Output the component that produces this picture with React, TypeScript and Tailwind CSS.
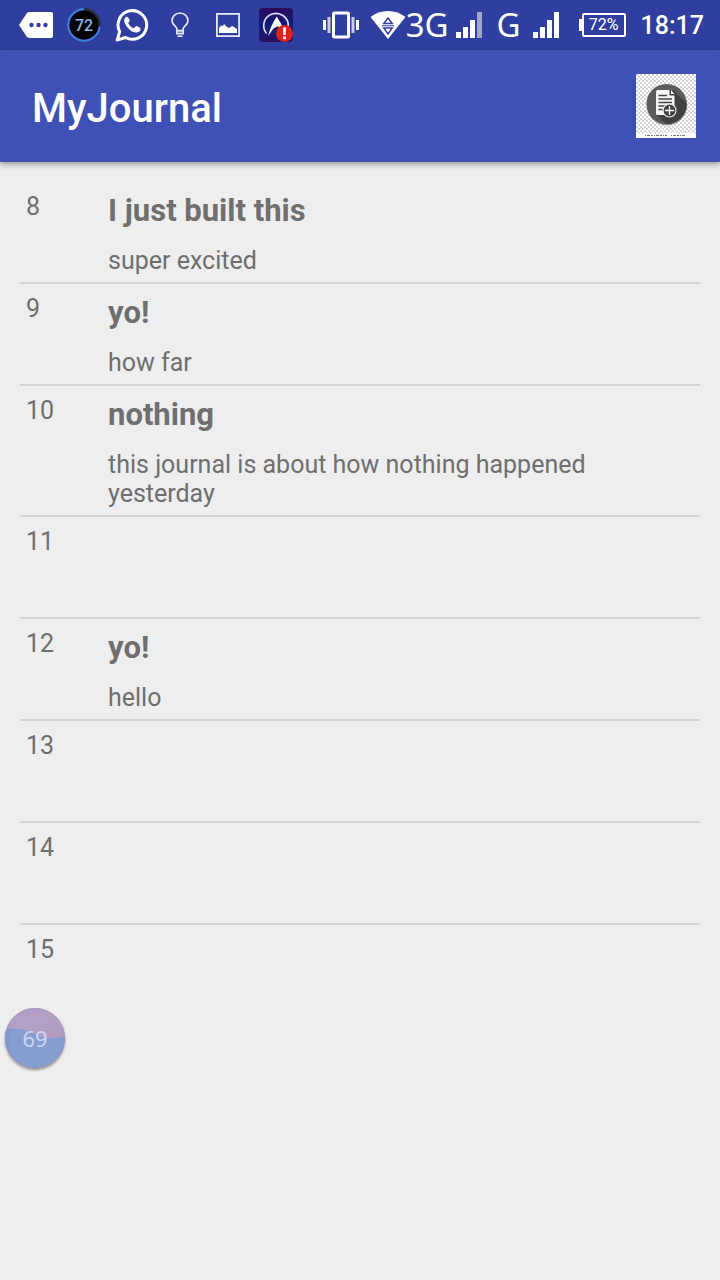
import React from "react";

type Entry = { id: number; title?: string; body?: string };

const entries: Entry[] = [
  { id: 8, title: "I just built this", body: "super excited" },
  { id: 9, title: "yo!", body: "how far" },
  { id: 10, title: "nothing", body: "this journal is about how nothing happened yesterday" },
  { id: 11 },
  { id: 12, title: "yo!", body: "hello" },
  { id: 13 },
  { id: 14 },
  { id: 15 },
];

function MessageTagIcon() {
  return (
    <svg width="34" height="26" viewBox="0 0 34 26" aria-hidden="true">
      <path d="M8 1Q9 0 11 0H32Q34 0 34 2V24Q34 26 32 26H11Q9 26 8 25L0 13Z" fill="#fff" />
      <circle cx="12.500" cy="13" r="2.200" fill="#303f9f" />
      <circle cx="19.500" cy="13" r="2.200" fill="#303f9f" />
      <circle cx="26.500" cy="13" r="2.200" fill="#303f9f" />
    </svg>
  );
}

function GaugeIcon() {
  return (
    <svg width="34" height="34" viewBox="0 0 34 34" aria-label="72">
      <circle cx="17" cy="17" r="17" fill="#2b2d3c" />
      <path d="M32.600 18.500A15.700 15.700 0 1 1 17 1.300" fill="none" stroke="#3f7cf0" strokeWidth="2.400" />
      <circle cx="17" cy="17" r="14.500" fill="#000" />
      <text x="17" y="23" textAnchor="middle" fontSize="16" fontWeight="500" fontFamily="Roboto, sans-serif" fill="#8fb5ea">72</text>
    </svg>
  );
}

function WhatsAppIcon() {
  return (
    <svg width="34" height="36" viewBox="0 0 34 36" aria-hidden="true">
      <path d="M2.200 33L4.700 24.600A14.300 14.300 0 1 1 10.500 30.500Z" fill="none" stroke="#fff" strokeWidth="3" strokeLinejoin="round" />
      <path d="M12.100 9.800C11 9.500 9.300 11.200 9.200 13.400C9.100 17 14.600 24.700 20.500 25.500C23.400 25.900 25.500 24 25.700 21.800C25.700 21.100 21.800 18.900 21.100 19.100C20.300 19.500 19.500 21.400 18.700 21.300C16.700 20.800 13.900 17.600 13.300 16.200C13.100 15.600 14.900 14.500 14.800 13.700C14.700 13.100 13.400 10.100 12.100 9.800Z" fill="#fff" />
    </svg>
  );
}

function BulbIcon() {
  return (
    <svg width="18" height="26" viewBox="0 0 18 26" aria-hidden="true">
      <path d="M5.800 18.500V16.500C5.800 14.500 1 13 1 8.800A8 7.800 0 0 1 17 8.800C17 13 12.200 14.500 12.200 16.500V18.500Z" fill="none" stroke="#e4e8f7" strokeWidth="1.700" />
      <path d="M5 18H13V22.500H5Z" fill="#e4e8f7" />
      <path d="M6.500 20.200H11.500" stroke="#303f9f" strokeWidth="0.800" />
      <path d="M6.500 24.200H11.500" stroke="#e4e8f7" strokeWidth="1.600" />
    </svg>
  );
}

function PictureIcon() {
  return (
    <svg width="24" height="24" viewBox="0 0 24 24" aria-hidden="true">
      <rect x="0.900" y="0.900" width="22.200" height="22.200" fill="none" stroke="#e4e8f7" strokeWidth="1.800" />
      <path d="M3 20V15L5 12.500L7 13L8 11L11 14L13 15L16 13L18 14L21 16V20Z" fill="#fff" />
    </svg>
  );
}

function AlertAppIcon() {
  return (
    <svg width="34" height="34" viewBox="0 0 34 34" aria-hidden="true">
      <defs>
        <linearGradient id="app-tile" x1="0" y1="0" x2="0" y2="1">
          <stop offset="0" stopColor="#2c0a5a" />
          <stop offset="0.450" stopColor="#101c78" />
          <stop offset="0.750" stopColor="#1b1a70" />
          <stop offset="1" stopColor="#2a0c5e" />
        </linearGradient>
      </defs>
      <rect width="34" height="34" rx="4" fill="url(#app-tile)" />
      <path d="M7.500 25.500A12.300 12.300 0 1 1 29.300 18" fill="none" stroke="#dadaf5" strokeWidth="1.700" />
      <path d="M17.800 8.500Q12 17 9 28L14.500 20.500L18.500 18.200L25 22Q21.500 14 17.800 8.500Z" fill="#fff" />
      <circle cx="25.500" cy="25.500" r="8.500" fill="#df2417" />
      <path d="M24 19.500H27L26.700 27H24.300ZM24 28.500H27V31.300H24Z" fill="#fff" />
    </svg>
  );
}

function VibrateIcon() {
  return (
    <svg width="36" height="28" viewBox="0 0 36 28" aria-hidden="true">
      <rect x="10.500" y="2" width="15" height="24" rx="1" fill="none" stroke="#fff" strokeWidth="3" />
      <path d="M1.500 9V19M34.500 9V19" stroke="#fff" strokeWidth="3" />
      <path d="M6 6V22M30 6V22" stroke="#c8cdea" strokeWidth="3" />
    </svg>
  );
}

function WifiIcon() {
  return (
    <svg width="36" height="28" viewBox="0 0 36 28" aria-hidden="true">
      <path d="M0.500 6Q8 0 18 0T35.500 6L18 28Z" fill="#fff" />
      <path d="M18 7L22.200 12.500H13.800Z" fill="#fff" stroke="#303f9f" strokeWidth="1.500" />
      <path d="M12 14.800H24" stroke="#303f9f" strokeWidth="1" />
      <path d="M13.800 17H22.200L18 23Z" fill="#fff" stroke="#303f9f" strokeWidth="1.500" />
    </svg>
  );
}

function SignalIcon({ weak = false }: { weak?: boolean }) {
  return (
    <svg width="26" height="26" viewBox="0 0 26 26" aria-hidden="true">
      <path d="M0 20H5V26H0ZM7 15H12V26H7ZM14 8H19V26H14Z" fill="#fff" />
      <path d="M21 0H26V26H21Z" fill={weak ? "#9ea5d2" : "#fff"} />
    </svg>
  );
}

function Battery() {
  return (
    <div className="flex items-center">
      <span className="h-3 w-[3px] bg-white" />
      <span className="flex h-6 w-11 items-center justify-center rounded-xs border-2 border-white text-base leading-5">
        72%
      </span>
    </div>
  );
}

function StatusBar() {
  return (
    <div className="flex h-[50px] items-center justify-between bg-[#303f9f] pr-4 pl-[19px] text-white">
      <div className="flex items-center gap-[14px]">
        <MessageTagIcon />
        <GaugeIcon />
        <WhatsAppIcon />
        <div className="flex items-center gap-[27px] pl-2">
          <BulbIcon />
          <PictureIcon />
        </div>
        <div className="pl-[5px]">
          <AlertAppIcon />
        </div>
      </div>
      <div className="flex items-center">
        <VibrateIcon />
        <div className="ml-[11px] flex items-center">
          <WifiIcon />
          <span className="font-['Noto_Sans',sans-serif] text-[33px] leading-[50px]">3G</span>
        </div>
        <div className="ml-[7px] flex items-center gap-[15px]">
          <SignalIcon weak />
          <div className="flex items-center gap-3">
            <span className="font-['Noto_Sans',sans-serif] text-[33px] leading-[50px]">G</span>
            <SignalIcon />
          </div>
        </div>
        <div className="ml-5 flex items-center gap-[15px]">
          <Battery />
          <time className="pt-0.5 text-[25px] leading-8 font-medium">18:17</time>
        </div>
      </div>
    </div>
  );
}

function AddNoteIcon() {
  return (
    <svg width="60" height="64" viewBox="0 0 60 64" aria-hidden="true">
      <defs>
        <pattern id="checks" width="4" height="4" patternUnits="userSpaceOnUse">
          <rect width="4" height="4" fill="#fff" />
          <path d="M0 0H2V2H0ZM2 2H4V4H2Z" fill="#d6d6d6" />
        </pattern>
        <clipPath id="disc">
          <circle cx="30.500" cy="30" r="20" />
        </clipPath>
      </defs>
      <rect width="60" height="64" fill="#fff" />
      <rect width="60" height="59" fill="url(#checks)" />
      <circle cx="31" cy="31" r="20.300" fill="#8b8b8b" />
      <circle cx="30.500" cy="30" r="20" fill="#5c5c5c" />
      <path d="M37 16L60 38V62H42L21 41Z" fill="#414141" clipPath="url(#disc)" />
      <path d="M21.500 16H34L38.500 21V41H21.500Q20 41 20 39.500V17.500Q20 16 21.500 16Z" fill="#f5f5f5" />
      <path d="M33.500 16H39V21.500H33.500Z" fill="#444" />
      <path d="M35 16L38.500 20H35Z" fill="#fff" />
      <path d="M22.500 21.500H31M22.500 25H36M22.500 28.500H36M22.500 32H29M22.500 35.500H27" stroke="#444" strokeWidth="1.300" />
      <circle cx="33.500" cy="36.500" r="6.500" fill="#414141" stroke="#f5f5f5" strokeWidth="1.100" />
      <path d="M33.500 32V41M29 36.500H38" stroke="#fff" strokeWidth="1.300" />
      <path d="M9 61.500H31M35 61.500H50" stroke="#777" strokeWidth="1.200" strokeDasharray="1 1 3 1 2 1" />
    </svg>
  );
}

function FloatingMonitor() {
  return (
    <button type="button" aria-label="Memory use 69" className="absolute top-[1008px] left-[5px] rounded-full shadow-[0_2px_3px_rgba(0,0,0,0.4)]">
      <svg className="block" width="60" height="60" viewBox="0 0 60 60" aria-hidden="true">
        <defs>
          <clipPath id="bubble">
            <circle cx="30" cy="30" r="30" />
          </clipPath>
          <linearGradient id="bubble-top" x1="0" y1="0" x2="1" y2="1">
            <stop offset="0" stopColor="#b3a1c8" />
            <stop offset="1" stopColor="#ad97b9" />
          </linearGradient>
        </defs>
        <g clipPath="url(#bubble)">
          <rect width="60" height="60" fill="url(#bubble-top)" />
          <path d="M0 22C14 18 23 23 32 27C42 31 50 31 60 28V60H0Z" fill="#8299d0" />
          <circle cx="36" cy="36" r="32" fill="#fff" opacity="0.040" />
        </g>
        <circle cx="30" cy="30" r="29.500" fill="none" stroke="#8d8da7" strokeOpacity="0.400" />
        <text x="30" y="39" textAnchor="middle" fontSize="22" fontFamily="Noto Sans, sans-serif" fill="#ccd6f1">69</text>
      </svg>
    </button>
  );
}

export default function App() {
  return (
    <div className="relative min-h-screen bg-[#eeeeee] font-[Roboto,sans-serif] text-[#6f6f6f]">
      <StatusBar />
      <header className="flex h-28 items-center justify-between bg-[#3f51b5] pr-6 pl-8 text-white shadow-[0_2px_6px_rgba(0,0,0,0.4)]">
        <h1 className="pt-1.5 text-[40px] leading-[48px] font-medium">MyJournal</h1>
        <button type="button" aria-label="Add entry">
          <AddNoteIcon />
        </button>
      </header>
      <main className="p-5">
        <ul className="divide-y-2 divide-[#d4d4d4]">
          {entries.map((entry) => (
            <li key={entry.id} className="flex min-h-[102px] pr-5 pl-[6px]">
              <span className="w-[82px] shrink-0 pt-[10px] text-[25px] leading-[29px]">{entry.id}</span>
              {entry.title && (
                <div className="max-w-[520px] min-w-0 pt-[11px] pb-[7px]">
                  <h2 className="text-[31px] leading-9 font-bold">{entry.title}</h2>
                  <p className="pt-[17px] text-[25px] leading-[29px]">{entry.body}</p>
                </div>
              )}
            </li>
          ))}
        </ul>
      </main>
      <FloatingMonitor />
    </div>
  );
}
